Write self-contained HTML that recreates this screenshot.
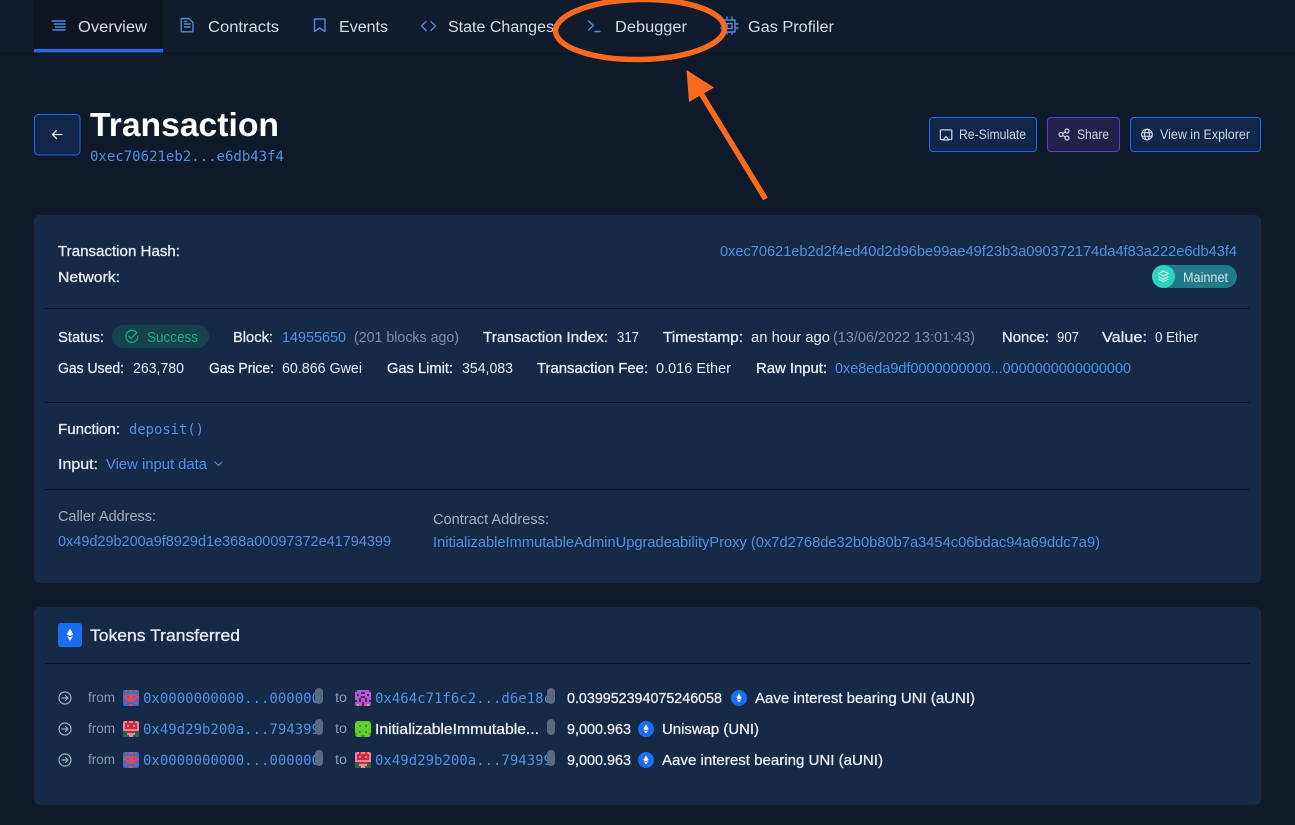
<!DOCTYPE html>
<html lang="en"><head><meta charset="utf-8"><title>Transaction</title>
<style>
html,body{margin:0;padding:0;background:#0e1929;width:1295px;height:825px;overflow:hidden}
svg{display:block}
text{font-family:"Liberation Sans",sans-serif;font-size:14.5px;fill:#e8edf3;white-space:pre}
.m{stroke:#e8edf3;stroke-width:.3}
.l{fill:#548fe4}
.g{fill:#7f8fa6}
.h{fill:#a5afbc}
.n{font-size:15.5px;fill:#d5dde8}
.c{font-family:"DejaVu Sans Mono","Liberation Mono",monospace;font-size:14px;fill:#548fe4}
.f{fill:#8e9aab;font-size:13.5px}
.b{font-size:13.5px;fill:#ced6e1}
.i{fill:none;stroke:#5089dc;stroke-width:1.4;stroke-linecap:round;stroke-linejoin:round}
.w{fill:none;stroke:#ced6e1;stroke-width:1.2;stroke-linecap:round;stroke-linejoin:round}
.a{fill:none;stroke:#a5afbc;stroke-width:1.2;stroke-linecap:round;stroke-linejoin:round}
</style></head><body>
<svg width="1295" height="825" viewBox="0 0 1295 825" xmlns="http://www.w3.org/2000/svg">
<defs>
<clipPath id="c1"><rect x="143" y="685" width="175" height="90"/></clipPath>
<clipPath id="c2"><rect x="375" y="685" width="174" height="90"/></clipPath>
<symbol id="ia" viewBox="0 0 16 16"><rect width="16" height="16" rx="2" fill="#3470c8"/><path fill="#d9485c" d="M2 0h2v2H2zM12 0h2v2h-2zM6 0h4v2H6zM2 4h12v6H2zM4 10h8v2H4zM0 6h2v2H0zM14 6h2v2h-2zM2 12h2v2H2zM12 12h2v2h-2zM6 14h4v2H6z"/><path fill="#3470c8" d="M4 6h2v2H4zM10 6h2v2h-2z"/></symbol>
<symbol id="ib" viewBox="0 0 16 16"><rect width="16" height="16" rx="2" fill="#f07cb0"/><path fill="#c9302c" d="M2 2h12v6H2zM4 0h2v2H4zM10 0h2v2h-2zM4 10h8v2H4z"/><path fill="#f07cb0" d="M4 4h2v2H4zM10 4h2v2h-2zM6 8h4v2H6z"/><path fill="#1f6b3a" d="M0 10h4v6H0zM12 10h4v6h-4zM4 14h2v2H4zM10 14h2v2h-2z"/></symbol>
<symbol id="ic" viewBox="0 0 16 16"><rect width="16" height="16" rx="2" fill="#a55fd0"/><path fill="#6b1d5c" d="M0 0h2v2H0zM14 0h2v2h-2zM6 2h4v2H6zM2 4h2v2H2zM12 4h2v2h-2zM6 6h4v2H6zM4 8h2v4H4zM10 8h2v4h-2zM0 10h2v2H0zM14 10h2v2h-2zM7 12h2v4H7z"/><path fill="#e8a25a" d="M2 14h2v2H2zM12 14h2v2h-2z"/></symbol>
<symbol id="id" viewBox="0 0 16 16"><rect width="16" height="16" rx="3" fill="#62cf2c"/><path fill="#3f9a22" d="M4 4h2v2H4zM10 4h2v2h-2zM0 12h2v2H0zM14 12h2v2h-2zM6 14h4v2H6zM4 10h2v2H4zM10 10h2v2h-2z"/></symbol>
<symbol id="ie" viewBox="0 0 16 16"><rect width="16" height="16" rx="8" fill="#1a6cf0"/><path fill="#fff" d="M8 3.400 10.600 8 8 9.500 5.400 8zM8 10.300l2.400-1.400L8 12.600 5.600 8.900z"/></symbol>
<g id="ar"><circle cx="0" cy="0" r="6" class="a"/><path d="M-3 0h6M.6-2.500 3 0 .6 2.500" class="a"/></g>
</defs>

<rect width="1295" height="825" fill="#0e1929"/>
<!-- nav -->
<rect width="1295" height="53" fill="#101c2e"/>
<rect y="53" width="1295" height="1" fill="#0a121e"/>
<rect x="34" width="129" height="49" fill="#0d1622"/>
<rect x="34" y="49" width="129" height="3.400" fill="#1a6cf0"/>
<path class="i" d="M52 21h13M54.500 24h10.500M55.500 27h9.500M53 30h12" stroke-width="1.200"/>
<path class="i" d="M182 18.500h7l4 4V31a.8.8 0 0 1-.8.8h-10.200a.8.8 0 0 1-.8-.8V19.300a.8.8 0 0 1 .8-.8zM184.500 24h5.500M184.500 27h5.500M184.500 21.500h2"/>
<path class="i" d="M314.500 19h10.500v12.500l-5.250-3.500-5.250 3.500z"/>
<path class="i" d="M426 21.500 421.500 26l4.500 4.500M431 21.500l4.500 4.500-4.500 4.500"/>
<path class="i" d="M588.500 21 593.500 25.500 588.500 30M595 31.500h5"/>
<path class="i" d="M724 20h11v12h-11zM727 23.500h5v5h-5zM727 17v3M732 17v3M721 24h3M721 28h3M735 24h3M735 28h3M727 32v2M732 32v2"/>
<text class="n" x="78" y="32" textLength="69" lengthAdjust="spacingAndGlyphs">Overview</text>
<text class="n" x="208" y="32" textLength="71" lengthAdjust="spacingAndGlyphs">Contracts</text>
<text class="n" x="339" y="32" textLength="49" lengthAdjust="spacingAndGlyphs">Events</text>
<text class="n" x="448" y="32" textLength="106" lengthAdjust="spacingAndGlyphs">State Changes</text>
<text class="n" x="615" y="32" textLength="72" lengthAdjust="spacingAndGlyphs">Debugger</text>
<text class="n" x="748" y="32" textLength="86" lengthAdjust="spacingAndGlyphs">Gas Profiler</text>

<!-- header -->
<rect x="34.500" y="114.500" width="45.500" height="40.500" rx="4" fill="#10264a" stroke="#1a6cf0"/>
<path d="M62 134.500h-9M56.500 130.500 52.500 134.500l4 4" fill="none" stroke="#e8edf3" stroke-width="1.300" stroke-linecap="round" stroke-linejoin="round"/>
<text x="90" y="136" style="font-size:33px;font-weight:700;fill:#fff" textLength="189" lengthAdjust="spacingAndGlyphs">Transaction</text>
<text class="c" x="90" y="161" textLength="194" lengthAdjust="spacingAndGlyphs">0xec70621eb2...e6db43f4</text>

<rect x="929.500" y="117.500" width="107" height="34" rx="3.500" fill="#10264a" stroke="#1a6cf0"/>
<path class="w" d="M943 139.500h-1.800a.8.8 0 0 1-.8-.8v-8a.8.8 0 0 1 .8-.8h9.800a.8.8 0 0 1 .8.800v8a.8.8 0 0 1-.8.800H949M946 136.500l3 3.500h-6z"/>
<text class="b" x="959" y="139" textLength="67" lengthAdjust="spacingAndGlyphs">Re-Simulate</text>
<rect x="1047.500" y="117.500" width="72" height="34" rx="3.500" fill="#21214a" stroke="#5b3fc0"/>
<circle class="w" cx="1061" cy="134.500" r="2"/><circle class="w" cx="1067" cy="131" r="2"/><circle class="w" cx="1067" cy="138" r="2"/><path class="w" d="M1062.800 133.500l2.500-1.500M1062.800 135.500l2.500 1.500"/>
<text class="b" x="1077" y="139" textLength="32" lengthAdjust="spacingAndGlyphs">Share</text>
<rect x="1130.500" y="117.500" width="130" height="34" rx="3.500" fill="#10264a" stroke="#1a6cf0"/>
<circle class="w" cx="1147" cy="134.500" r="5.300"/><ellipse class="w" cx="1147" cy="134.500" rx="2.400" ry="5.300"/><path class="w" d="M1142 132.700h10M1142 136.300h10"/>
<text class="b" x="1160" y="139" textLength="90" lengthAdjust="spacingAndGlyphs">View in Explorer</text>

<!-- card 1 -->
<rect x="34" y="215" width="1227" height="368" rx="6" fill="#152a47"/>
<text class="m" x="58" y="256" textLength="122" lengthAdjust="spacingAndGlyphs">Transaction Hash:</text>
<text class="m" x="58" y="282" textLength="62" lengthAdjust="spacingAndGlyphs">Network:</text>
<text class="l" x="720" y="256" textLength="517" lengthAdjust="spacingAndGlyphs">0xec70621eb2d2f4ed40d2d96be99ae49f23b3a090372174da4f83a222e6db43f4</text>
<rect x="1152" y="265" width="85" height="23" rx="11.500" fill="#207a88"/>
<circle cx="1163.500" cy="276.500" r="11.500" fill="#2cd3bd"/>
<path d="M1163.500 271l5 2.500-5 2.500-5-2.500zM1158.500 276.500l5 2.500 5-2.500M1158.500 279l5 2.500 5-2.500" fill="none" stroke="#d9f5f0" stroke-width="1" stroke-linejoin="round"/>
<text x="1183" y="282" style="font-size:13.5px;fill:#cfe0e6" textLength="45" lengthAdjust="spacingAndGlyphs">Mainnet</text>
<rect x="45" y="308" width="1205" height="1" fill="#0b1626"/>

<text class="m" x="58" y="342" textLength="46" lengthAdjust="spacingAndGlyphs">Status:</text>
<rect x="112" y="325" width="97" height="23" rx="11.500" fill="#14424f"/>
<path d="M136.500 332.500a6 6 0 1 0 1.400 3.800" fill="none" stroke="#1fae82" stroke-width="1.200" stroke-linecap="round"/>
<path d="M128.500 336l2.500 2.500 5.500-5.500" fill="none" stroke="#1fae82" stroke-width="1.200" stroke-linecap="round" stroke-linejoin="round"/>
<text x="147" y="342" style="fill:#1fae82" textLength="51" lengthAdjust="spacingAndGlyphs">Success</text>
<text class="m" x="233" y="342" textLength="40" lengthAdjust="spacingAndGlyphs">Block:</text>
<text class="l" x="282" y="342" textLength="64" lengthAdjust="spacingAndGlyphs">14955650</text>
<text class="g" x="354" y="342" textLength="105" lengthAdjust="spacingAndGlyphs">(201 blocks ago)</text>
<text class="m" x="483" y="342" textLength="125" lengthAdjust="spacingAndGlyphs">Transaction Index:</text>
<text x="617" y="342" textLength="22" lengthAdjust="spacingAndGlyphs">317</text>
<text class="m" x="663" y="342" textLength="80" lengthAdjust="spacingAndGlyphs">Timestamp:</text>
<text x="751" y="342" textLength="79" lengthAdjust="spacingAndGlyphs">an hour ago</text>
<text class="g" x="833" y="342" textLength="142" lengthAdjust="spacingAndGlyphs">(13/06/2022 13:01:43)</text>
<text class="m" x="1002" y="342" textLength="47" lengthAdjust="spacingAndGlyphs">Nonce:</text>
<text x="1057" y="342" textLength="22" lengthAdjust="spacingAndGlyphs">907</text>
<text class="m" x="1102" y="342" textLength="45" lengthAdjust="spacingAndGlyphs">Value:</text>
<text x="1155" y="342" textLength="43" lengthAdjust="spacingAndGlyphs">0 Ether</text>

<text class="m" x="58" y="373" textLength="66" lengthAdjust="spacingAndGlyphs">Gas Used:</text>
<text x="133" y="373" textLength="51" lengthAdjust="spacingAndGlyphs">263,780</text>
<text class="m" x="209" y="373" textLength="65" lengthAdjust="spacingAndGlyphs">Gas Price:</text>
<text x="282" y="373" textLength="80" lengthAdjust="spacingAndGlyphs">60.866 Gwei</text>
<text class="m" x="387" y="373" textLength="66" lengthAdjust="spacingAndGlyphs">Gas Limit:</text>
<text x="462" y="373" textLength="51" lengthAdjust="spacingAndGlyphs">354,083</text>
<text class="m" x="537" y="373" textLength="111" lengthAdjust="spacingAndGlyphs">Transaction Fee:</text>
<text x="656" y="373" textLength="75" lengthAdjust="spacingAndGlyphs">0.016 Ether</text>
<text class="m" x="756" y="373" textLength="71" lengthAdjust="spacingAndGlyphs">Raw Input:</text>
<text class="l" x="835" y="373" textLength="296" lengthAdjust="spacingAndGlyphs">0xe8eda9df0000000000...0000000000000000</text>
<rect x="45" y="402" width="1205" height="1" fill="#0b1626"/>

<text class="m" x="58" y="434" textLength="62" lengthAdjust="spacingAndGlyphs">Function:</text>
<text class="c" x="129" y="434" textLength="75" lengthAdjust="spacingAndGlyphs">deposit()</text>
<text class="m" x="58" y="469" textLength="40" lengthAdjust="spacingAndGlyphs">Input:</text>
<text class="l" x="106" y="469" textLength="101" lengthAdjust="spacingAndGlyphs">View input data</text>
<path d="M215 462l3.500 3.500 3.500-3.500" fill="none" stroke="#5089dc" stroke-width="1.200" stroke-linecap="round" stroke-linejoin="round"/>
<rect x="45" y="489" width="1205" height="1" fill="#0b1626"/>

<text class="h" x="58" y="521" textLength="98" lengthAdjust="spacingAndGlyphs">Caller Address:</text>
<text class="l" x="58" y="546" textLength="333" lengthAdjust="spacingAndGlyphs">0x49d29b200a9f8929d1e368a00097372e41794399</text>
<text class="h" x="433" y="524" textLength="116" lengthAdjust="spacingAndGlyphs">Contract Address:</text>
<text class="l" x="433" y="547" textLength="667" lengthAdjust="spacingAndGlyphs">InitializableImmutableAdminUpgradeabilityProxy (0x7d2768de32b0b80b7a3454c06bdac94a69ddc7a9)</text>

<!-- card 2 -->
<rect x="34" y="607" width="1227" height="198" rx="6" fill="#152a47"/>
<rect x="58" y="623" width="24" height="24" rx="3" fill="#1a6cf0"/>
<path fill="#fff" d="M70 628.500l3.200 5.800-3.200 2-3.200-2zM70 637.500l3-1.800L70 641l-3-5.300z"/>
<text class="m" x="90" y="641" style="font-size:16.5px" textLength="150" lengthAdjust="spacingAndGlyphs">Tokens Transferred</text>
<rect x="45" y="663" width="1205" height="1" fill="#0b1626"/>

<use href="#ar" x="65" y="698"/><use href="#ar" x="65" y="729"/><use href="#ar" x="65" y="760"/>
<text class="f" x="88" y="702" textLength="27" lengthAdjust="spacingAndGlyphs">from</text>
<text class="f" x="88" y="733" textLength="27" lengthAdjust="spacingAndGlyphs">from</text>
<text class="f" x="88" y="764" textLength="27" lengthAdjust="spacingAndGlyphs">from</text>
<use href="#ia" x="123" y="690" width="16" height="16"/>
<use href="#ib" x="123" y="721" width="16" height="16"/>
<use href="#ia" x="123" y="752" width="16" height="16"/>
<g clip-path="url(#c1)">
<text class="c" x="143" y="703">0x0000000000...000000</text>
<text class="c" x="143" y="734">0x49d29b200a...794399</text>
<text class="c" x="143" y="765">0x0000000000...000000</text>
</g>
<rect x="315" y="688" width="8" height="16" rx="4" fill="#5a6a80"/>
<rect x="315" y="719" width="8" height="16" rx="4" fill="#5a6a80"/>
<rect x="315" y="750" width="8" height="16" rx="4" fill="#5a6a80"/>
<text class="f" x="335" y="702" textLength="12" lengthAdjust="spacingAndGlyphs">to</text>
<text class="f" x="335" y="733" textLength="12" lengthAdjust="spacingAndGlyphs">to</text>
<text class="f" x="335" y="764" textLength="12" lengthAdjust="spacingAndGlyphs">to</text>
<use href="#ic" x="355" y="690" width="16" height="16"/>
<use href="#id" x="355" y="721" width="16" height="16"/>
<use href="#ib" x="355" y="752" width="16" height="16"/>
<g clip-path="url(#c2)">
<text class="c" x="375" y="703">0x464c71f6c2...d6e18c</text>
<text class="m" x="375" y="734" textLength="164" lengthAdjust="spacingAndGlyphs">InitializableImmutable...</text>
<text class="c" x="375" y="765">0x49d29b200a...794399</text>
</g>
<rect x="547" y="688" width="8" height="16" rx="4" fill="#5a6a80"/>
<rect x="547" y="719" width="8" height="16" rx="4" fill="#5a6a80"/>
<rect x="547" y="750" width="8" height="16" rx="4" fill="#5a6a80"/>
<text class="m" x="567" y="703" textLength="155" lengthAdjust="spacingAndGlyphs">0.039952394075246058</text>
<use href="#ie" x="731" y="690" width="16" height="16"/>
<text class="m" x="755" y="703" textLength="220" lengthAdjust="spacingAndGlyphs">Aave interest bearing UNI (aUNI)</text>
<text class="m" x="567" y="734" textLength="64" lengthAdjust="spacingAndGlyphs">9,000.963</text>
<use href="#ie" x="638" y="721" width="16" height="16"/>
<text class="m" x="662" y="734" textLength="97" lengthAdjust="spacingAndGlyphs">Uniswap (UNI)</text>
<text class="m" x="567" y="765" textLength="64" lengthAdjust="spacingAndGlyphs">9,000.963</text>
<use href="#ie" x="638" y="752" width="16" height="16"/>
<text class="m" x="662" y="765" textLength="221" lengthAdjust="spacingAndGlyphs">Aave interest bearing UNI (aUNI)</text>

<!-- annotation -->
<ellipse cx="640" cy="29.500" rx="84.500" ry="30" fill="none" stroke="#f96a1e" stroke-width="5.500" transform="rotate(-1 640 29.500)"/>
<path d="M765.500 199 699 90" fill="none" stroke="#f96a1e" stroke-width="5.500"/>
<path fill="#f96a1e" d="M686.500 70 714 87.500 689 102z"/>
</svg>
</body></html>
